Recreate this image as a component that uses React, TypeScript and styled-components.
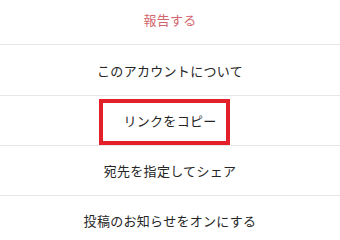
import React from 'react'
import styled, { createGlobalStyle } from 'styled-components'

const GlobalStyle = createGlobalStyle`
  html, body {
    margin: 0;
    padding: 0;
    background: #fff;
    overflow: hidden;
  }
  body {
    font-family: "Noto Sans CJK JP", "Noto Sans", sans-serif;
  }
`

const Sheet = styled.div`
  width: 340px;
  height: 240px;
  overflow: hidden;
  background: #fff;
`

const List = styled.ul`
  list-style: none;
  margin: -6px 0 0;
  padding: 0;
`

const Row = styled.li<{ $danger?: boolean }>`
  position: relative;
  display: flex;
  align-items: center;
  justify-content: center;
  height: 50px;
  box-sizing: border-box;
  border-top: 1px solid #e6e6e6;
  font-size: 13px;
  letter-spacing: 0.3px;
  color: ${p => (p.$danger ? '#d2666e' : '#262626')};

  &:first-child {
    border-top: none;
  }
  &:nth-child(2) {
    height: 51px;
  }
`

const Highlight = styled.span`
  position: absolute;
  top: 3px;
  left: 99px;
  width: 131px;
  height: 46px;
  box-sizing: border-box;
  border: 4px solid #e3202a;
  pointer-events: none;
`

const items = [
  { label: '報告する', danger: true },
  { label: 'このアカウントについて' },
  { label: 'リンクをコピー', marked: true },
  { label: '宛先を指定してシェア' },
  { label: '投稿のお知らせをオンにする' },
]

export default function App() {
  return (
    <>
      <GlobalStyle />
      <Sheet>
        <List>
          {items.map(item => (
            <Row key={item.label} $danger={item.danger}>
              {item.label}
              {item.marked && <Highlight />}
            </Row>
          ))}
        </List>
      </Sheet>
    </>
  )
}
